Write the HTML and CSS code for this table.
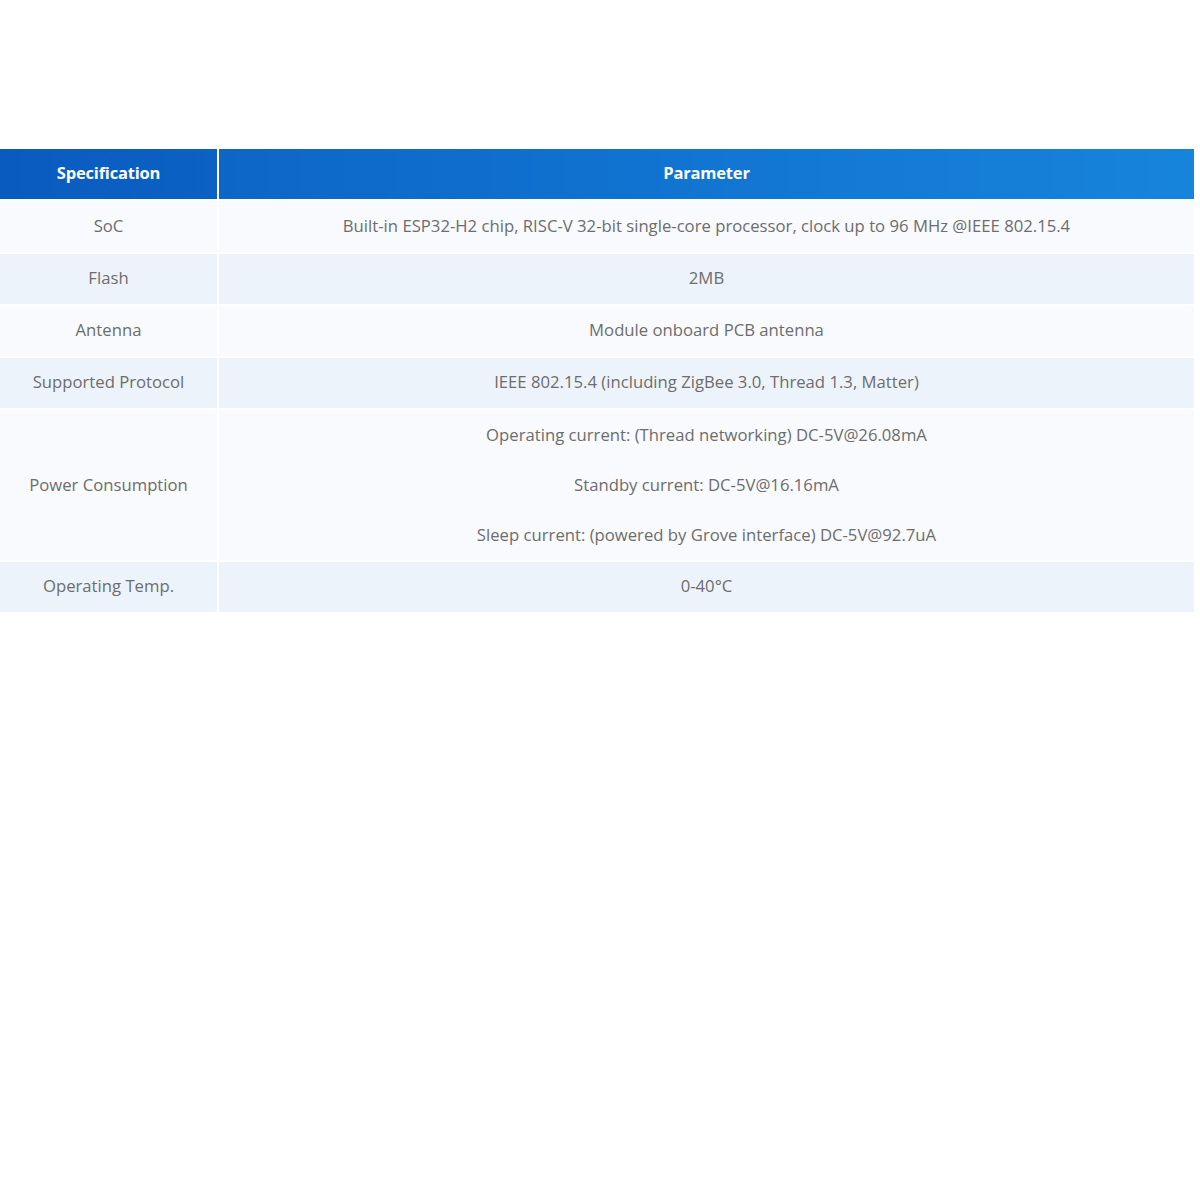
FILE: index.html
```html
<!DOCTYPE html>
<html>
<head>
<meta charset="utf-8">
<link rel="stylesheet" href="styles.css">
</head>
<body>
<table class="spec">
  <thead>
    <tr><th class="c1">Specification</th><th class="c2">Parameter</th></tr>
  </thead>
  <tbody>
    <tr class="odd first"><td>SoC</td><td>Built-in ESP32-H2 chip, RISC-V 32-bit single-core processor, clock up to 96 MHz @IEEE 802.15.4</td></tr>
    <tr class="even"><td>Flash</td><td>2MB</td></tr>
    <tr class="odd"><td>Antenna</td><td>Module onboard PCB antenna</td></tr>
    <tr class="even"><td>Supported Protocol</td><td>IEEE 802.15.4 (including ZigBee 3.0, Thread 1.3, Matter)</td></tr>
    <tr class="odd"><td class="tall">Power Consumption</td><td class="multi"><p>Operating current: (Thread networking) DC-5V@26.08mA</p><p>Standby current: DC-5V@16.16mA</p><p>Sleep current: (powered by Grove interface) DC-5V@92.7uA</p></td></tr>
    <tr class="even"><td>Operating Temp.</td><td>0-40°C</td></tr>
  </tbody>
</table>
</body>
</html>
```
FILE: styles.css
```css
html, body {
  margin: 0;
  padding: 0;
  background: #ffffff;
}
body {
  padding-top: 149px;
  font-family: "Open Sans", "Noto Sans", sans-serif;
}
.spec {
  width: 1198px;
  border-collapse: separate;
  border-spacing: 2px;
  margin: -2px 0 0 -2px;
  table-layout: fixed;
}
.spec th, .spec td {
  text-align: center;
  vertical-align: middle;
  padding: 0 0 3px 0;
  font-size: 16.7px;
  height: 47px;
}
.spec th {
  color: #ffffff;
  font-weight: 700;
  font-size: 16.5px;
  letter-spacing: -0.2px;
  padding-bottom: 4px;
  height: 46px;
}
.spec .c1 {
  width: 217px;
  background: linear-gradient(90deg, #0a5bc0, #0b61c4);
}
.spec .c2 {
  background: linear-gradient(90deg, #0c66c8, #1784db);
}
.spec td {
  color: #6d6d6d;
}
.odd td { background: #f8fafd; }
.even td { background: #edf3fb; }
.first td { height: 48px; padding-bottom: 3px; }
.spec td.multi { padding: 0; }
.spec td.tall { padding-bottom: 1px; }
.multi p {
  margin: 0;
  line-height: 50px;
}
```
